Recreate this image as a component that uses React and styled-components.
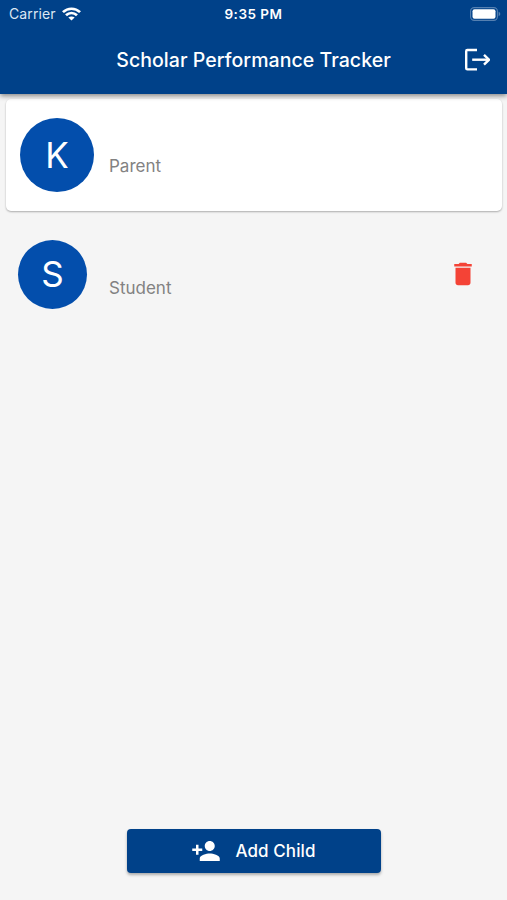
import React from "react";
import styled, { createGlobalStyle } from "styled-components";
import { MdDelete, MdPersonAdd } from "react-icons/md";

function App() {
  return (
    <>
      <GlobalStyle />
      <StScreen>
        <StHeader>
          <StStatusBar>
            <StCarrier>
              <span>Carrier</span>
              <WifiIcon />
            </StCarrier>
            <StTime>9:35 PM</StTime>
            <StBattery>
              <BatteryIcon />
            </StBattery>
          </StStatusBar>
          <StTitleBar>
            <StTitle>Scholar Performance Tracker</StTitle>
            <StLogoutButton aria-label="Log out">
              <LogoutIcon />
            </StLogoutButton>
          </StTitleBar>
        </StHeader>
        <StMain>
          <StParentCard>
            <StAvatar $size={74} $fontSize={35}>
              K
            </StAvatar>
            <StRole>Parent</StRole>
          </StParentCard>
          <StChildRow>
            <StAvatar $size={69} $fontSize={35}>
              S
            </StAvatar>
            <StRole>Student</StRole>
            <StDeleteButton aria-label="Delete">
              <MdDelete />
            </StDeleteButton>
          </StChildRow>
        </StMain>
        <StFooter>
          <StAddButton>
            <MdPersonAdd />
            <span>Add Child</span>
          </StAddButton>
        </StFooter>
      </StScreen>
    </>
  );
}

function WifiIcon() {
  return (
    <svg width="19" height="14" viewBox="0 0 18 14" preserveAspectRatio="none" fill="none" stroke="#fff" strokeWidth="2.6">
      <path d="M0.9 5.2C5.5 0.6 12.5 0.6 17.1 5.2" />
      <path d="M3.8 8.2C6.8 5.3 11.2 5.3 14.2 8.2" />
      <path d="M9 13.5L6 10.5C7.7 9 10.3 9 12 10.5Z" fill="#fff" stroke="none" />
    </svg>
  );
}

function BatteryIcon() {
  return (
    <svg width="31" height="14" viewBox="0 0 31 14">
      <rect x="0.6" y="0.6" width="26.8" height="12.8" rx="3.6" fill="none" stroke="#5580b1" strokeWidth="1.1" />
      <rect x="2.5" y="2.3" width="23" height="9.4" rx="2" fill="#fff" />
      <path d="M28.6 4.8C30.8 5.5 30.8 8.5 28.6 9.2Z" fill="#5580b1" />
    </svg>
  );
}

function LogoutIcon() {
  return (
    <svg width="26" height="24" viewBox="0 0 26 24" fill="none" stroke="#fff" strokeWidth="2.4">
      <path d="M13 2H3.4Q2.2 2 2.2 3.2V20.2Q2.2 21.4 3.4 21.4H13" />
      <path d="M8.2 11.7H24" />
      <path d="M20 6.8L25 11.7L20 16.6" />
    </svg>
  );
}

export default App;

const GlobalStyle = createGlobalStyle`
  * {
    box-sizing: border-box;
  }
  body {
    margin: 0;
    font-family: Inter, "Liberation Sans", sans-serif;
    background-color: #f5f5f5;
  }
  button {
    border: none;
    padding: 0;
    font-family: inherit;
    background: none;
  }
  svg {
    display: block;
  }
`;

const StScreen = styled.div`
  display: flex;
  flex-direction: column;
  height: 900px;
  background-color: #f5f5f5;
`;

const StHeader = styled.header`
  position: relative;
  z-index: 1;
  height: 94px;
  color: #fff;
  background-color: #004189;
  box-shadow: 0 2px 5px rgba(0, 0, 0, 0.45);
`;

const StStatusBar = styled.div`
  display: grid;
  grid-template-columns: 1fr auto 1fr;
  align-items: center;
  height: 27px;
  padding: 0 6px 0 9px;
`;

const StCarrier = styled.div`
  display: flex;
  align-items: center;
  gap: 6px;
  font-size: 14px;
  letter-spacing: 0.1px;
  color: #dce7f3;
`;

const StTime = styled.div`
  margin-right: 3px;
  font-size: 13.5px;
  font-weight: 600;
  letter-spacing: 0.5px;
`;

const StBattery = styled.div`
  display: flex;
  justify-content: flex-end;
`;

const StTitleBar = styled.div`
  display: grid;
  grid-template-columns: 1fr auto 1fr;
  align-items: center;
  height: 65px;
  padding: 0 17px;
`;

const StTitle = styled.h1`
  grid-column: 2;
  margin: 0;
  font-size: 19.5px;
  font-weight: 500;
  letter-spacing: 0.05px;
  white-space: nowrap;
`;

const StLogoutButton = styled.button`
  justify-self: end;
`;

const StMain = styled.main`
  flex: 1;
`;

const StParentCard = styled.section`
  display: flex;
  align-items: center;
  height: 112px;
  margin: 5px 5px 0 6px;
  padding-left: 14px;
  border-radius: 5px;
  background-color: #fff;
  box-shadow: 0 1px 2px rgba(0, 0, 0, 0.3);
`;

const StChildRow = styled.section`
  display: flex;
  align-items: center;
  height: 112px;
  margin-top: 7px;
  padding: 0 29px 0 18px;
`;

const StAvatar = styled.div`
  display: flex;
  align-items: center;
  justify-content: center;
  width: ${({ $size }) => $size}px;
  height: ${({ $size }) => $size}px;
  border-radius: 50%;
  font-size: ${({ $fontSize }) => $fontSize}px;
  color: #fff;
  background-color: #034eac;
`;

const StRole = styled.p`
  margin: 22px 0 0 15px;
  font-size: 17px;
  line-height: 20px;
  color: #828282;

  ${StChildRow} & {
    margin: 27px 0 0 22px;
  }
`;

const StDeleteButton = styled.button`
  margin-left: auto;
  font-size: 30px;
  color: #f44336;
`;

const StFooter = styled.footer`
  display: flex;
  justify-content: center;
  padding-bottom: 27px;
`;

const StAddButton = styled.button`
  display: flex;
  align-items: center;
  justify-content: center;
  gap: 14px;
  width: 254px;
  height: 44px;
  border-radius: 4px;
  font-size: 17px;
  font-weight: 500;
  letter-spacing: 0.1px;
  color: #fff;
  background-color: #004189;
  box-shadow: 0 2px 3px rgba(0, 0, 0, 0.3);

  & svg {
    font-size: 30px;
  }
`;
